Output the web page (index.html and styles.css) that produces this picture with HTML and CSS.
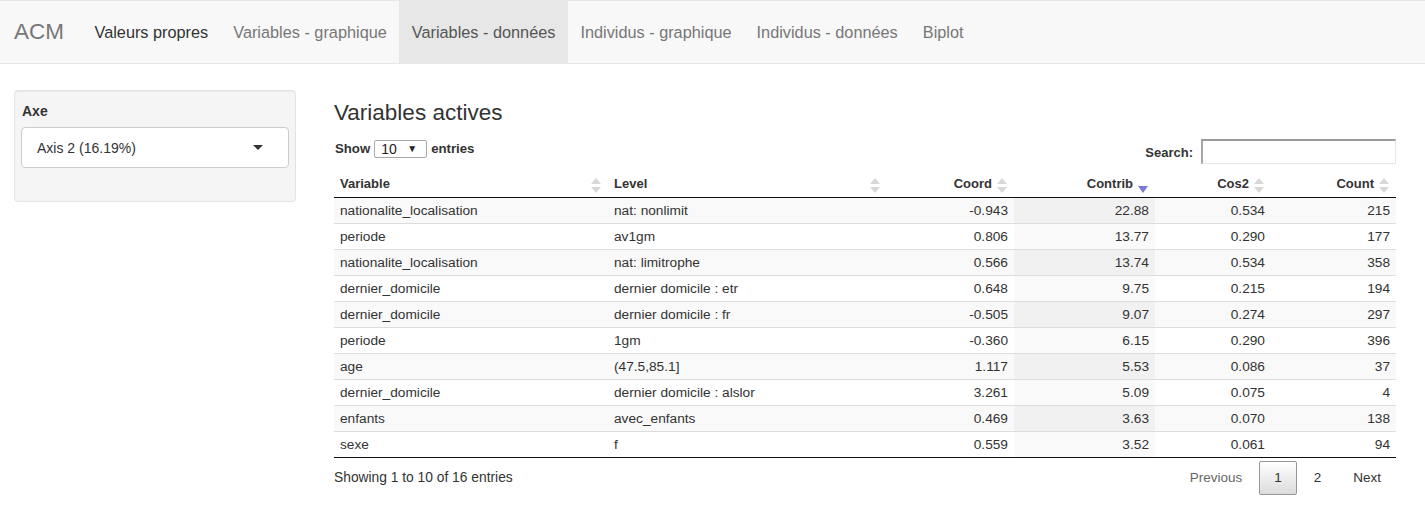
FILE: index.html
```html
<!DOCTYPE html>
<html lang="fr">
<head>
<meta charset="utf-8">
<title>ACM</title>
<link rel="stylesheet" href="styles.css">
</head>
<body>
<nav class="navbar">
  <span class="brand">ACM</span>
  <ul class="nav">
    <li class="nav-item focus"><span class="nav-link">Valeurs propres</span></li>
    <li class="nav-item"><span class="nav-link">Variables - graphique</span></li>
    <li class="nav-item active"><span class="nav-link">Variables - données</span></li>
    <li class="nav-item"><span class="nav-link">Individus - graphique</span></li>
    <li class="nav-item"><span class="nav-link">Individus - données</span></li>
    <li class="nav-item"><span class="nav-link">Biplot</span></li>
  </ul>
</nav>

<div class="page">
  <aside class="sidebar">
    <div class="well">
      <label class="ctl-label">Axe</label>
      <div class="selectize">
        <span class="sel-text">Axis 2 (16.19%)</span>
        <span class="caret"></span>
      </div>
    </div>
  </aside>

  <main class="main">
    <h3 class="title">Variables actives</h3>
    <div class="dt-top">
      <div class="dt-length">
        <span>Show</span>
        <span class="len-select"><span>10</span><span class="len-arrow">▼</span></span>
        <span>entries</span>
      </div>
      <div class="dt-filter">
        <label class="search-label">Search:</label>
        <span class="search-input"></span>
      </div>
    </div>

    <table class="dt">
      <colgroup>
        <col class="w-var"><col class="w-lvl"><col class="w-coord"><col class="w-contrib"><col class="w-cos"><col class="w-count">
      </colgroup>
      <thead>
        <tr>
          <th>Variable<span class="sort both"><i class="up"></i><i class="down"></i></span></th>
          <th>Level<span class="sort both"><i class="up"></i><i class="down"></i></span></th>
          <th class="num">Coord<span class="sort both"><i class="up"></i><i class="down"></i></span></th>
          <th class="num">Contrib<span class="sort desc"><i class="down"></i></span></th>
          <th class="num">Cos2<span class="sort both"><i class="up"></i><i class="down"></i></span></th>
          <th class="num">Count<span class="sort both"><i class="up"></i><i class="down"></i></span></th>
        </tr>
      </thead>
      <tbody>
        <tr class="odd"><td>nationalite_localisation</td><td>nat: nonlimit</td><td class="num">-0.943</td><td class="num sorted">22.88</td><td class="num">0.534</td><td class="num">215</td></tr>
        <tr class="even"><td>periode</td><td>av1gm</td><td class="num">0.806</td><td class="num sorted">13.77</td><td class="num">0.290</td><td class="num">177</td></tr>
        <tr class="odd"><td>nationalite_localisation</td><td>nat: limitrophe</td><td class="num">0.566</td><td class="num sorted">13.74</td><td class="num">0.534</td><td class="num">358</td></tr>
        <tr class="even"><td>dernier_domicile</td><td>dernier domicile : etr</td><td class="num">0.648</td><td class="num sorted">9.75</td><td class="num">0.215</td><td class="num">194</td></tr>
        <tr class="odd"><td>dernier_domicile</td><td>dernier domicile : fr</td><td class="num">-0.505</td><td class="num sorted">9.07</td><td class="num">0.274</td><td class="num">297</td></tr>
        <tr class="even"><td>periode</td><td>1gm</td><td class="num">-0.360</td><td class="num sorted">6.15</td><td class="num">0.290</td><td class="num">396</td></tr>
        <tr class="odd"><td>age</td><td>(47.5,85.1]</td><td class="num">1.117</td><td class="num sorted">5.53</td><td class="num">0.086</td><td class="num">37</td></tr>
        <tr class="even"><td>dernier_domicile</td><td>dernier domicile : alslor</td><td class="num">3.261</td><td class="num sorted">5.09</td><td class="num">0.075</td><td class="num">4</td></tr>
        <tr class="odd"><td>enfants</td><td>avec_enfants</td><td class="num">0.469</td><td class="num sorted">3.63</td><td class="num">0.070</td><td class="num">138</td></tr>
        <tr class="even"><td>sexe</td><td>f</td><td class="num">0.559</td><td class="num sorted">3.52</td><td class="num">0.061</td><td class="num">94</td></tr>
      </tbody>
    </table>

    <div class="dt-bottom">
      <div class="dt-info">Showing 1 to 10 of 16 entries</div>
      <div class="dt-paginate">
        <span class="pg-btn disabled">Previous</span>
        <span class="pg-btn current">1</span>
        <span class="pg-btn">2</span>
        <span class="pg-btn">Next</span>
      </div>
    </div>
  </main>
</div>
</body>
</html>
```

FILE: styles.css
```css
* { box-sizing: border-box; }

html, body {
  margin: 0;
  padding: 0;
  background: #fff;
}

body {
  font-family: "Liberation Sans", Arial, Helvetica, sans-serif;
  font-size: 14px;
  line-height: 20px;
  color: #333;
}

/* ---------- navbar ---------- */
.navbar {
  display: flex;
  align-items: stretch;
  height: 64px;
  background: #f8f8f8;
  border-top: 1px solid #e7e7e7;
  border-bottom: 1px solid #e7e7e7;
}

.brand {
  display: flex;
  align-items: center;
  padding: 0 18px 0 14px;
  font-size: 22.5px;
  color: #777;
}

.nav {
  display: flex;
  margin: 0;
  padding: 0;
  list-style: none;
}

.nav-item {
  display: flex;
  align-items: center;
}

.nav-link {
  display: flex;
  align-items: center;
  height: 100%;
  padding: 0 12.5px;
  font-size: 16.3px;
  color: #777;
}

.nav-item.focus .nav-link { color: #333; }

.nav-item.active .nav-link {
  background: #e7e7e7;
  color: #555;
}

/* ---------- page layout ---------- */
.page {
  display: flex;
  align-items: flex-start;
  gap: 38px;
  padding: 26px 0 0 14px;
}

.sidebar { width: 282px; flex: none; }

.well {
  background: #f5f5f5;
  border: 1px solid #e3e3e3;
  border-radius: 4px;
  padding: 10px 6px 0 6px;
  box-shadow: inset 0 1px 1px rgba(0,0,0,.05);
}

.ctl-label {
  display: block;
  font-weight: bold;
  font-size: 14px;
  line-height: 20px;
  margin: 0 0 6px 1px;
}

.selectize {
  display: flex;
  align-items: center;
  justify-content: space-between;
  height: 41px;
  margin-bottom: 33px;
  padding: 0 25px 0 15px;
  background: #fff;
  border: 1px solid #ccc;
  border-radius: 4px;
  font-size: 14px;
  color: #333;
}

.caret {
  width: 0;
  height: 0;
  border-style: solid;
  border-width: 5px 5.5px 0 5.5px;
  border-color: #333 transparent transparent transparent;
}

.main {
  width: 1062px;
  flex: none;
}

.title {
  margin: 10px 0 13px;
  font-size: 22.5px;
  line-height: 26px;
  font-weight: normal;
  color: #333;
}

/* ---------- datatable controls ---------- */
.dt-top {
  display: flex;
  justify-content: space-between;
  align-items: flex-start;
  height: 25px;
}

.dt-length {
  display: flex;
  align-items: center;
  gap: 4px;
  height: 18px;
  margin-top: 1px;
  font-size: 13.2px;
  font-weight: bold;
  line-height: 18px;
  padding-left: 1px;
}

.len-select {
  display: flex;
  align-items: center;
  justify-content: space-between;
  width: 53px;
  height: 18px;
  padding: 0 9px 0 6px;
  border: 1px solid #a9a9a9;
  border-radius: 2px;
  background: #fff;
  font-size: 14px;
  font-weight: normal;
  color: #222;
}

.len-arrow {
  font-size: 10px;
  line-height: 10px;
  color: #222;
}

.dt-filter {
  display: flex;
  align-items: flex-end;
  height: 25px;
}

.search-label {
  font-size: 13px;
  font-weight: bold;
  line-height: 18px;
  margin: 0 8px 2px 0;
}

.search-input {
  display: block;
  width: 195px;
  height: 25px;
  background: #fff;
  border-style: solid;
  border-width: 2px 1px 1px 2px;
  border-color: #9a9a9a #e6e6e6 #e6e6e6 #a6a6a6;
}

/* ---------- table ---------- */
.dt {
  width: 1062px;
  margin-top: 7px;
  table-layout: fixed;
  border-collapse: separate;
  border-spacing: 0;
  border-bottom: 1px solid #111;
}

.w-var { width: 274px; }
.w-lvl { width: 279px; }
.w-coord { width: 127px; }
.w-contrib { width: 141px; }
.w-cos { width: 116px; }
.w-count { width: 125px; }

.dt th {
  position: relative;
  padding: 4px 22px 4px 6px;
  line-height: 18px;
  font-size: 13px;
  font-weight: bold;
  text-align: left;
  color: #333;
  border-bottom: 1px solid #111;
  white-space: nowrap;
}

.dt td {
  padding: 4px 6px;
  line-height: 17px;
  font-size: 13.7px;
  color: #333;
  border-top: 1px solid #ddd;
  white-space: nowrap;
}

.dt tbody tr:first-child td { border-top: none; }

.dt .num { text-align: right; }

.dt tr.odd td { background: #f9f9f9; }
.dt tr.odd td.sorted { background: #f1f1f1; }
.dt tr.even td.sorted { background: #fafafa; }

/* sort icons */
.sort {
  position: absolute;
  right: 7px;
  top: 7px;
  width: 10px;
  height: 15px;
}

.sort i {
  position: absolute;
  left: 0;
  width: 0;
  height: 0;
  border-style: solid;
}

.sort .up {
  top: 0;
  border-width: 0 5px 6px 5px;
  border-color: transparent transparent #d8d8d8 transparent;
}

.sort .down {
  top: 9px;
  border-width: 6px 5px 0 5px;
  border-color: #d8d8d8 transparent transparent transparent;
}

.sort.desc .down {
  top: 8px;
  border-width: 7px 5px 0 5px;
  border-color: #7a7ad8 transparent transparent transparent;
}

/* ---------- footer ---------- */
.dt-bottom {
  display: flex;
  justify-content: space-between;
  align-items: flex-start;
}

.dt-info {
  padding-top: 10px;
  font-size: 13.8px;
  line-height: 20px;
}

.dt-paginate {
  display: flex;
  padding-top: 3px;
}

.pg-btn {
  display: block;
  min-width: 36px;
  margin-left: 2px;
  padding: 7px 14px;
  line-height: 18px;
  font-size: 13.5px;
  text-align: center;
  color: #333;
  border: 1px solid transparent;
  border-radius: 2px;
}

.pg-btn.disabled { color: #666; }

.pg-btn.current {
  border-color: #979797;
  background: linear-gradient(to bottom, #ffffff 0%, #dcdcdc 100%);
}
```
